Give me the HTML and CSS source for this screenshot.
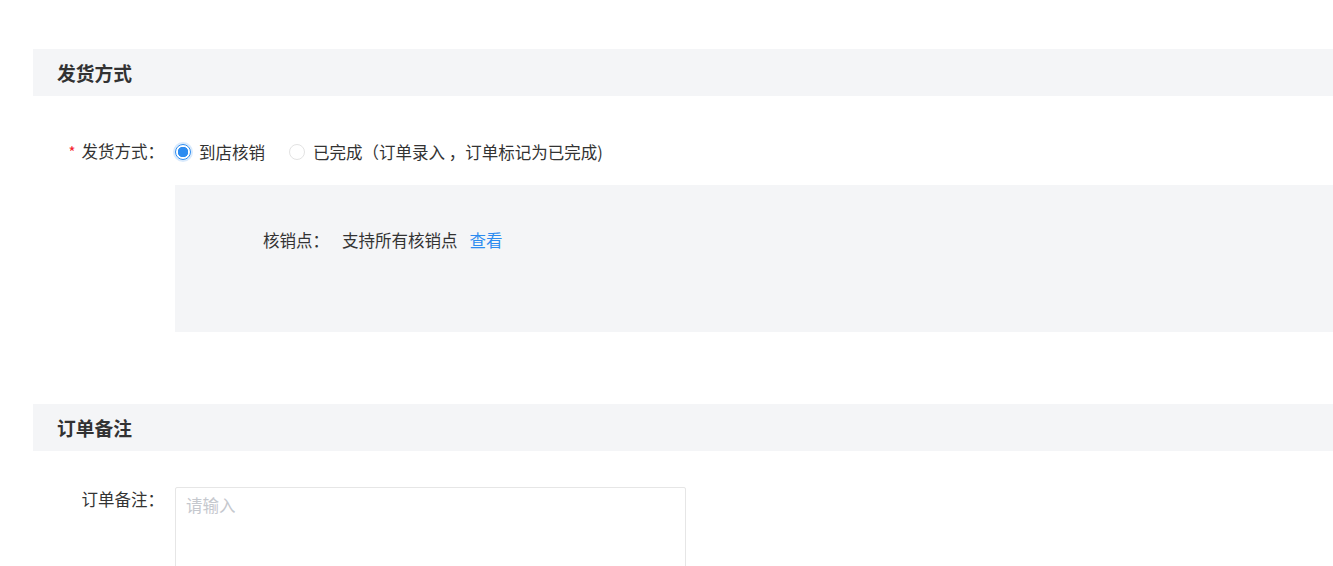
FILE: index.html
```html
<!DOCTYPE html>
<html lang="zh-CN">
<head>
  <meta charset="UTF-8" />
  <meta name="viewport" content="width=device-width, initial-scale=1.0"/>
  <title>订单信息</title>
  <link rel="stylesheet" href="styles.css">
</head>
<body>
  <div class="page">
    <div class="section-title">发货方式</div>

    <div class="form-block form-delivery">
      <div class="form-item">
        <label class="form-label"><span class="required">*</span>发货方式：</label>
        <div class="form-content">
          <div class="radio-group">
            <label class="radio checked">
              <span class="radio-inner"></span>
              <span class="radio-text">到店核销</span>
            </label>
            <label class="radio">
              <span class="radio-inner"></span>
              <span class="radio-text">已完成（订单录入 ，订单标记为已完成)</span>
            </label>
          </div>

          <div class="sub-panel">
            <div class="sub-item">
              <span class="sub-label">核销点：</span>
              <span class="sub-value">支持所有核销点</span>
              <a class="link" href="#">查看</a>
            </div>
          </div>
        </div>
      </div>
    </div>

    <div class="section-title">订单备注</div>

    <div class="form-block form-remark">
      <div class="form-item">
        <label class="form-label">订单备注：</label>
        <div class="form-content">
          <textarea class="textarea" placeholder="请输入"></textarea>
        </div>
      </div>
    </div>
  </div>
</body>
</html>
```

FILE: styles.css
```css
body {
  margin: 0;
  background: #fff;
  font-family: "Noto Sans CJK SC", "Noto Sans", sans-serif;
  font-size: 16.5px;
  color: #333;
  overflow: hidden;
}

.page {
  padding: 49px 0 0 33px;
}

.section-title {
  height: 47px;
  line-height: 47px;
  padding-left: 24px;
  background: #f4f5f7;
  font-size: 18.75px;
  font-weight: bold;
  color: #323233;
}

.form-delivery {
  padding: 40px 0 72px;
}

.form-remark {
  padding-top: 36px;
}

.form-item {
  display: flex;
  align-items: flex-start;
}

.form-label {
  flex: none;
  width: 131px;
  margin-right: 11px;
  text-align: right;
  line-height: 31px;
  white-space: nowrap;
  color: #333;
}

.form-remark .form-label {
  line-height: 24px;
}

.required {
  color: #f5222d;
  font-size: 15px;
  margin-right: 6px;
}

.form-content {
  flex: 1;
}

.radio-group {
  display: flex;
  align-items: center;
  height: 31px;
  gap: 24px;
}

.radio {
  display: flex;
  align-items: center;
  gap: 8px;
  cursor: pointer;
}

.radio-inner {
  box-sizing: border-box;
  width: 16px;
  height: 16px;
  border: 1px solid #e3e3e3;
  border-radius: 50%;
  background: #fff;
}

.radio.checked .radio-inner {
  border-color: #2d8cf0;
  background: radial-gradient(circle, #2d8cf0 0, #2d8cf0 5px, #fff 5.5px);
  box-shadow: 0 0 0 2px rgba(45, 140, 240, 0.18);
}

.sub-panel {
  margin-top: 18px;
  height: 147px;
  box-sizing: border-box;
  padding-top: 39px;
  background: #f4f5f7;
}

.sub-item {
  display: flex;
  align-items: center;
  height: 32px;
}

.sub-label {
  width: 154px;
  text-align: right;
  margin-right: 13px;
}

.sub-value {
  margin-right: 12px;
}

.link {
  color: #2d8cf0;
  text-decoration: none;
}

.textarea {
  display: block;
  box-sizing: border-box;
  width: 511px;
  height: 110px;
  padding: 5px 10px;
  border: 1px solid #e6e6e6;
  border-radius: 2px;
  font-family: inherit;
  font-size: 16.5px;
  line-height: 24px;
  color: #333;
  resize: none;
  outline: none;
}

.textarea::placeholder {
  color: #c5c8ce;
}
```
